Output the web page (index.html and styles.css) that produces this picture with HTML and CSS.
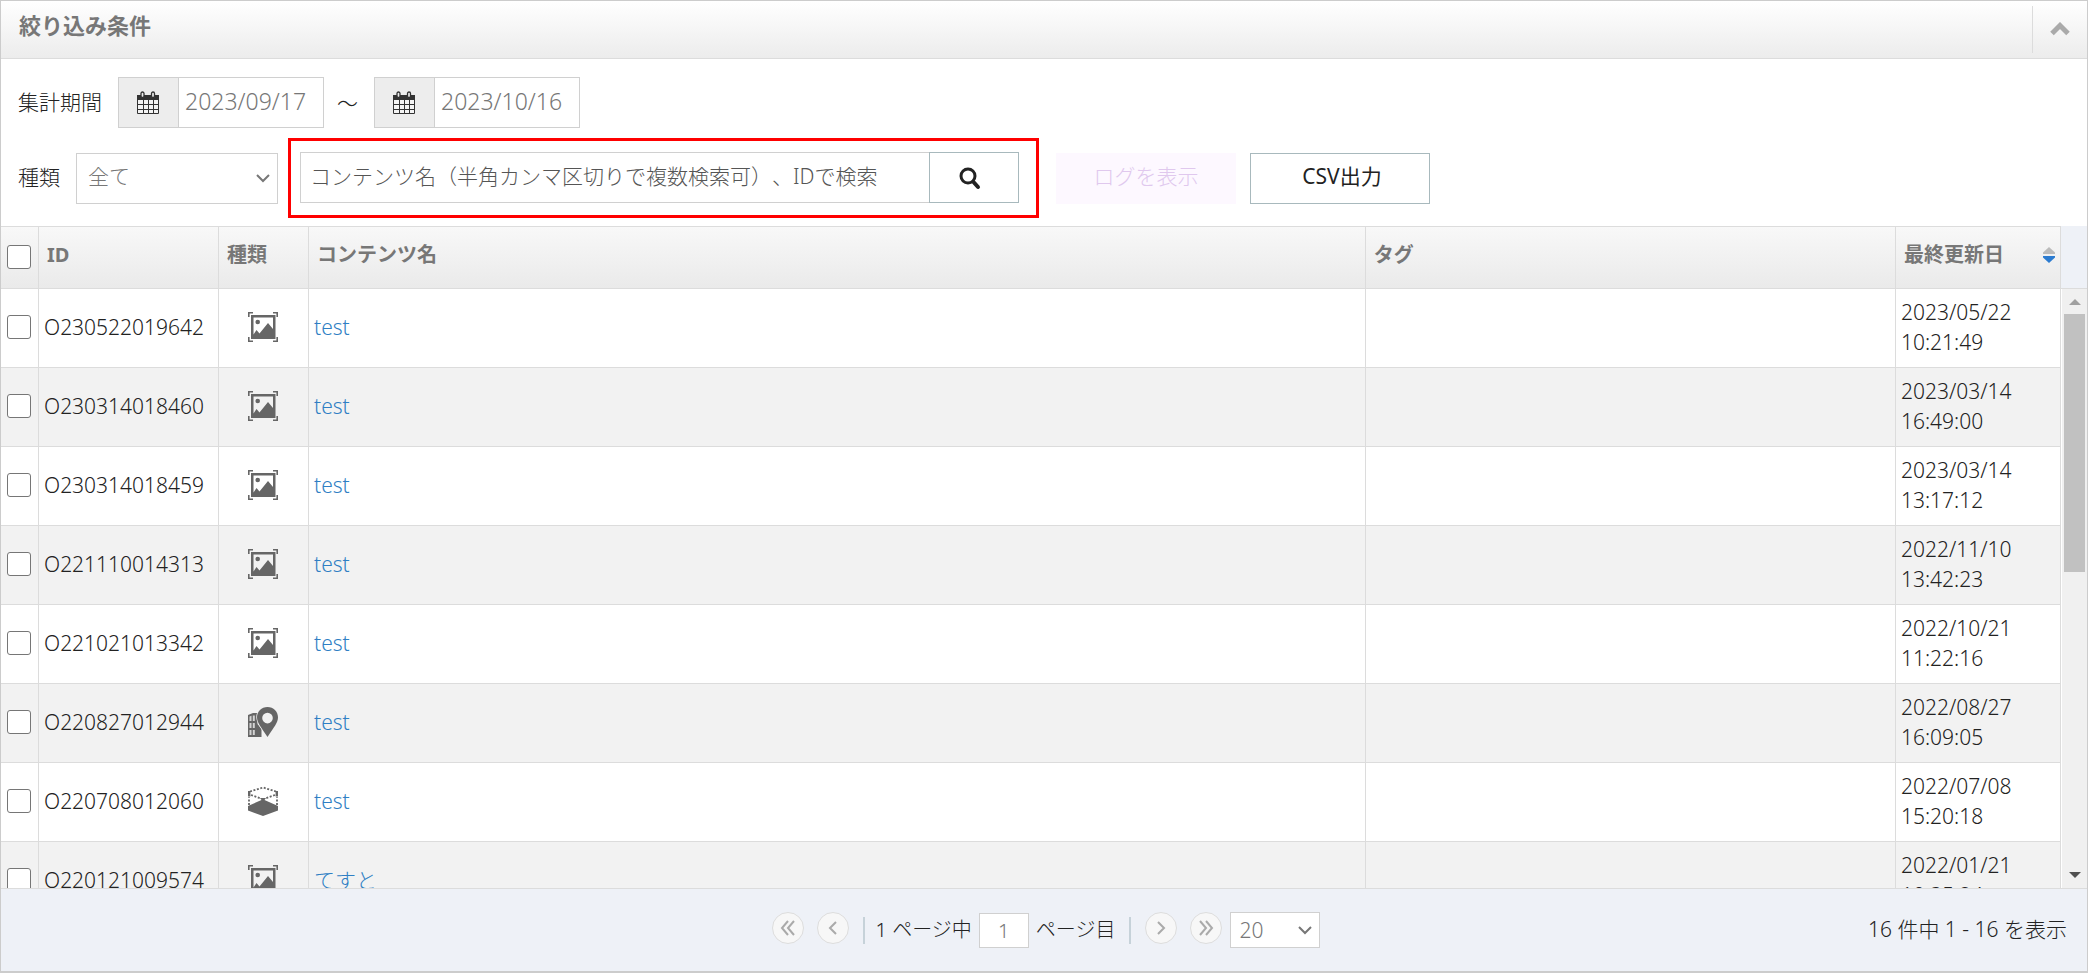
FILE: index.html
```html
<!DOCTYPE html>
<html lang="ja">
<head>
<meta charset="utf-8">
<title>絞り込み条件</title>
<link rel="stylesheet" href="styles.css">
</head>
<body>
<svg class="defs" aria-hidden="true">
  <symbol id="calendar" viewBox="0 0 22 24">
    <path fill="#333" d="M0 4h22v18q0 1-1 1H1q-1 0-1-1z"/>
    <path fill="#f4f4f4" d="M1 9h5v4H1zM7 9h4v4H7zM12 9h4v4h-4zM17 9h4v4h-4zM1 14h5v4H1zM7 14h4v4H7zM12 14h4v4h-4zM17 14h4v4h-4zM1 19h5v3H1zM7 19h4v3H7zM12 19h4v3h-4zM17 19h4v3h-4z"/>
    <rect x="4" y="1" width="3" height="5.500" rx="1.500" fill="#ededed" stroke="#333" stroke-width="1.300"/>
    <rect x="14.500" y="1" width="3" height="5.500" rx="1.500" fill="#ededed" stroke="#333" stroke-width="1.300"/>
  </symbol>
  <symbol id="image" viewBox="0 0 30 30">
    <path fill="none" stroke="#666" stroke-width="1.600" d="M.8 5V.8H5M25 .8h4.200V5M.8 25v4.200H5M25 29.200h4.200V25"/>
    <path fill="#666" fill-rule="evenodd" d="M3 3h24.500v24H3zM5.500 5.500v17L8.500 18l3 3.500L20 11l5 6V5.500z"/>
    <circle cx="9.700" cy="10" r="2.300" fill="#666"/>
  </symbol>
  <symbol id="place" viewBox="0 0 30 30">
    <path fill="#666" d="M0 8l5-2h4.500v11l4 5v8H0z"/>
    <path fill="#d4d4d4" d="M1.500 9.500l2-.8v5.300h-2zM4.800 8.500h2V14h-2zM1.500 16h2v5h-2zM4.800 16h2v5h-2zM1.500 23h2v5h-2zM4.800 23h2v5h-2z"/>
    <path fill="#666" stroke="#f2f2f2" stroke-width="1.500" paint-order="stroke" fill-rule="evenodd" d="M19.500 0C13.500 0 9 4.700 9 10.300 9 16 13 20 19.500 30 26 20 30 16 30 10.300 30 4.700 25.500 0 19.500 0zm0 5.800a5.300 5.300 0 1 1 0 10.600 5.300 5.300 0 0 1 0-10.600z"/>
  </symbol>
  <symbol id="space" viewBox="0 0 30 30">
    <path fill="#666" d="M0 20l13.500-6-1.500-2h6l-1.500 2L30 20v4.500L15 30 0 24.500z"/>
    <path fill="none" stroke="#666" stroke-width="1.800" stroke-dasharray="2 1.600" d="M2 5.500L15 1.500l13 4M1 19v-8M29 19v-8M3 9l10 3.500M27 9l-10 3.500"/>
    <path stroke="#666" stroke-width="2.400" d="M1.200 5v5.500M28.800 5v5.500"/>
  </symbol>
  <symbol id="search" viewBox="0 0 22 24">
    <circle cx="9" cy="10" r="7" fill="none" stroke="#222" stroke-width="3"/>
    <path stroke="#222" stroke-width="4" stroke-linecap="round" d="M14.500 16l4.500 5"/>
  </symbol>
  <symbol id="left" viewBox="0 0 20 20"><path class="line" d="M13 4l-6 6 6 6"/></symbol>
  <symbol id="right" viewBox="0 0 20 20"><path class="line" d="M7 4l6 6-6 6"/></symbol>
  <symbol id="first" viewBox="0 0 20 20"><path class="line" d="M10 3l-6 7 6 7M16 3l-6 7 6 7"/></symbol>
  <symbol id="last" viewBox="0 0 20 20"><path class="line" d="M4 3l6 7-6 7M10 3l6 7-6 7"/></symbol>
</svg>
<main class="panel">
  <header class="panel-head">
    <h1 class="title">絞り込み条件</h1>
    <button class="collapse" type="button" aria-label="折りたたむ"><svg class="collapse-icon" viewBox="0 0 20 14"><path d="M2 11.500l8-8 8 8" fill="none" stroke="#aaa" stroke-width="5"/></svg></button>
  </header>
  <form class="filters">
    <div class="filter-row">
      <label class="label" for="from">集計期間</label>
      <div class="date"><span class="date-icon"><svg class="icon-calendar"><use href="#calendar"/></svg></span><input class="date-input" id="from" type="text" value="2023/09/17"></div>
      <span class="tilde">～</span>
      <div class="date"><span class="date-icon"><svg class="icon-calendar"><use href="#calendar"/></svg></span><input class="date-input" type="text" aria-label="終了日" value="2023/10/16"></div>
    </div>
    <div class="filter-row">
      <label class="label" for="kind">種類</label>
      <select class="select kind" id="kind"><option>全て</option></select>
      <div class="search">
        <input class="search-input" type="text" aria-label="検索" placeholder="コンテンツ名（半角カンマ区切りで複数検索可）、IDで検索">
        <button class="search-button" type="button" aria-label="検索する"><svg class="icon-search"><use href="#search"/></svg></button>
      </div>
      <button class="button log" type="button" disabled>ログを表示</button>
      <button class="button csv" type="button">CSV出力</button>
    </div>
  </form>
  <section class="grid">
    <div class="viewport">
      <table class="table">
        <colgroup><col class="c-check"><col class="c-id"><col class="c-kind"><col class="c-name"><col class="c-tag"><col class="c-date"></colgroup>
        <thead><tr>
          <th class="check"><input type="checkbox" class="box" aria-label="すべて選択"></th><th>ID</th><th>種類</th><th>コンテンツ名</th><th>タグ</th>
          <th><div class="sortable">最終更新日<svg class="sort" viewBox="0 0 12 16"><path fill="#bbb" d="M6 0l6 5.500V7H0V5.500z"/><path fill="#2b7bd0" d="M0 9h12v1.500L6 16l-6-5.500z"/></svg></div></th>
        </tr></thead>
        <tbody>
          <tr><td class="check"><input type="checkbox" class="box" aria-label="O230522019642"></td><td>O230522019642</td><td class="kind-cell"><svg class="icon-kind"><use href="#image"/></svg></td><td><a class="link" href="#">test</a></td><td></td><td>2023/05/22<br>10:21:49</td></tr>
          <tr><td class="check"><input type="checkbox" class="box" aria-label="O230314018460"></td><td>O230314018460</td><td class="kind-cell"><svg class="icon-kind"><use href="#image"/></svg></td><td><a class="link" href="#">test</a></td><td></td><td>2023/03/14<br>16:49:00</td></tr>
          <tr><td class="check"><input type="checkbox" class="box" aria-label="O230314018459"></td><td>O230314018459</td><td class="kind-cell"><svg class="icon-kind"><use href="#image"/></svg></td><td><a class="link" href="#">test</a></td><td></td><td>2023/03/14<br>13:17:12</td></tr>
          <tr><td class="check"><input type="checkbox" class="box" aria-label="O221110014313"></td><td>O221110014313</td><td class="kind-cell"><svg class="icon-kind"><use href="#image"/></svg></td><td><a class="link" href="#">test</a></td><td></td><td>2022/11/10<br>13:42:23</td></tr>
          <tr><td class="check"><input type="checkbox" class="box" aria-label="O221021013342"></td><td>O221021013342</td><td class="kind-cell"><svg class="icon-kind"><use href="#image"/></svg></td><td><a class="link" href="#">test</a></td><td></td><td>2022/10/21<br>11:22:16</td></tr>
          <tr><td class="check"><input type="checkbox" class="box" aria-label="O220827012944"></td><td>O220827012944</td><td class="kind-cell"><svg class="icon-kind"><use href="#place"/></svg></td><td><a class="link" href="#">test</a></td><td></td><td>2022/08/27<br>16:09:05</td></tr>
          <tr><td class="check"><input type="checkbox" class="box" aria-label="O220708012060"></td><td>O220708012060</td><td class="kind-cell"><svg class="icon-kind"><use href="#space"/></svg></td><td><a class="link" href="#">test</a></td><td></td><td>2022/07/08<br>15:20:18</td></tr>
          <tr><td class="check"><input type="checkbox" class="box" aria-label="O220121009574"></td><td>O220121009574</td><td class="kind-cell"><svg class="icon-kind"><use href="#image"/></svg></td><td><a class="link" href="#">てすと</a></td><td></td><td>2022/01/21<br>10:35:24</td></tr>
        </tbody>
      </table>
    </div>
    <div class="side">
      <div class="side-head"></div>
      <div class="scrollbar">
        <svg class="arrow" viewBox="0 0 12 6"><path fill="#a0a0a0" d="M0 6l6-6 6 6z"/></svg>
        <div class="track"><div class="thumb"></div></div>
        <svg class="arrow" viewBox="0 0 12 6"><path fill="#505050" d="M0 0l6 6 6-6z"/></svg>
      </div>
    </div>
  </section>
  <footer class="footer">
    <nav class="pager">
      <div class="turns">
        <button class="turn" type="button" aria-label="最初"><svg class="icon-turn"><use href="#first"/></svg></button>
        <button class="turn" type="button" aria-label="前"><svg class="icon-turn"><use href="#left"/></svg></button>
      </div>
      <label class="page"><span>1 ページ中</span><input class="page-input" type="text" value="1"><span>ページ目</span></label>
      <div class="turns">
        <button class="turn" type="button" aria-label="次"><svg class="icon-turn"><use href="#right"/></svg></button>
        <button class="turn" type="button" aria-label="最後"><svg class="icon-turn"><use href="#last"/></svg></button>
      </div>
      <select class="select per" aria-label="表示件数"><option>20</option></select>
    </nav>
    <p class="total">16 件中 1 - 16 を表示</p>
  </footer>
</main>
</body>
</html>
```
FILE: styles.css
```css
* { box-sizing: border-box; }

body {
  margin: 0;
  color: #222;
  font: 300 21px/30px "Noto Sans", "Noto Sans CJK JP", sans-serif;
  text-spacing-trim: space-all;
}

input, select, button { font: inherit; border-radius: 0; }
svg { display: block; flex: none; }
.defs { position: absolute; width: 0; height: 0; }
.line { fill: none; stroke: #aaa; stroke-width: 2; }

.panel {
  display: flex;
  flex-direction: column;
  height: 100vh;
  border: 1px solid #ccc;
  border-bottom-width: 2px;
  background: #fff;
}

.panel-head {
  display: flex;
  justify-content: space-between;
  height: 58px;
  padding: 5px 0 5px 18px;
  border-bottom: 1px solid #dcdcdc;
  background: linear-gradient(#fff, #ececec);
}
.title { margin: 0; padding-top: 3px; color: #777; font-size: 22px; font-weight: 700; line-height: 32px; }
.collapse {
  display: grid;
  place-items: center;
  width: 55px;
  padding: 0 0 2px;
  border: 0;
  border-left: 1px solid #dcdcdc;
  background: none;
}
.collapse-icon { width: 20px; height: 14px; }

.filters { display: flex; flex-direction: column; gap: 10px; padding: 18px 18px 8px 17px; }
.filter-row { display: flex; align-items: center; height: 51px; }
.filter-row + .filter-row { height: 80px; }
.label { padding-bottom: 2px; }
.date { display: flex; width: 206px; height: 51px; margin-left: 16px; border: 1px solid #d0d0d0; }
.date-icon { display: grid; place-items: center; width: 60px; border-right: 1px solid #d0d0d0; background: #ededed; }
.icon-calendar { width: 22px; height: 24px; margin-right: 2px; }
.date-input { flex: 1; min-width: 0; padding: 0 0 4px 6px; border: 0; color: #777; font-size: 23px; }
.tilde { margin-left: 13px; }

.select {
  appearance: none;
  border: 1px solid #d0d0d0;
  color: #777;
  background: #fff url("data:image/svg+xml,%3Csvg xmlns='http://www.w3.org/2000/svg' viewBox='0 0 14 9'%3E%3Cpath d='M1 1l6 6 6-6' fill='none' stroke='%23777' stroke-width='2'/%3E%3C/svg%3E") no-repeat right 7px center / 14px 9px;
}
.kind { width: 202px; height: 51px; margin-left: 16px; padding: 0 12px 4px 11px; }
.search { display: flex; flex: none; width: 751px; height: 80px; margin-left: 10px; padding: 11px 17px 12px 9px; border: 3px solid #f00; }
.search-input { flex: 1; min-width: 0; padding: 0 9px 4px; border: 1px solid #d0d0d0; border-right: 0; }
.search-input::placeholder { color: #555; }
.search-button { display: grid; place-items: center; width: 90px; padding: 0 8px 0 0; border: 1px solid #a8b9bd; background: #fff; }
.icon-search { width: 22px; height: 24px; }
.button { width: 180px; height: 51px; padding: 0 0 4px; border: 1px solid #a8b9bd; background: #fff; color: #222; }
.log { margin-left: 17px; border-color: #fdf8ff; background: #fdf8ff; color: #e0c8ee; }
.csv { margin-left: 14px; padding-left: 4px; font-weight: 400; }

.grid { display: flex; flex: 1; min-height: 0; border-bottom: 1px solid #dcdcdc; }
.viewport { flex: 1; min-width: 0; overflow: hidden; }
.table { width: 100%; table-layout: fixed; border-collapse: separate; border-spacing: 0; }
.c-check { width: 38px; }
.c-id { width: 180px; }
.c-kind { width: 90px; }
.c-name { width: 51.3%; }
.c-date { width: 165px; }
th, td { border-right: 1px solid #dcdcdc; border-bottom: 1px solid #dcdcdc; text-align: left; }
th {
  height: 63px;
  padding: 0 8px 5px;
  border-top: 1px solid #dcdcdc;
  background: linear-gradient(#f8f8f8, #eaeaea);
  color: #777;
  font-size: 20px;
  font-weight: 700;
}
td { height: 79px; padding: 0 5px 3px; }
tbody tr:nth-child(even) { background: #f2f2f2; }
.check { padding: 0 0 2px 6px; }
.kind-cell { padding: 0 7px 2px 5px; }
.box {
  display: block;
  appearance: none;
  width: 24px;
  height: 24px;
  margin: 0;
  border: 1px solid #767676;
  border-radius: 3px;
  background: #fff;
}
.sortable { display: flex; align-items: center; justify-content: space-between; }
.sort { width: 12px; height: 16px; margin-right: -3px; }
.icon-kind { width: 30px; height: 30px; margin: 0 auto; }
.link { color: #2f7fc4; text-decoration: none; }

.side { display: flex; flex-direction: column; width: 26px; }
.side-head { height: 63px; border-bottom: 1px solid #dcdcdc; background: #eef1f7; }
.scrollbar { display: flex; flex: 1; flex-direction: column; align-items: center; gap: 9px; margin-left: 1px; padding: 10px 0; background: #f0f0f0; }
.arrow { width: 12px; height: 6px; }
.track { flex: 1; width: 21px; }
.thumb { height: 47%; background: #c1c1c1; }

.footer {
  display: grid;
  grid-template-columns: 1fr auto 1fr;
  height: 82px;
  padding: 22px 20px 0 24px;
  background: #eef1f7;
}
.pager { display: flex; grid-column: 2; height: 38px; align-items: center; }
.turns { display: flex; gap: 13px; margin-bottom: 4px; }
.turn { display: grid; place-items: center; width: 32px; height: 32px; padding: 0; border: 1px solid #ddd; border-radius: 50%; background: #f7f7f7; }
.icon-turn { width: 20px; height: 20px; }
.page { display: flex; align-items: center; gap: 7px; height: 27px; margin: 0 14px; padding: 0 14px 0 11px; border: solid #c6d2d9; border-width: 0 2px; font-size: 20px; }
.page-input { width: 50px; height: 35px; padding: 0; border: 1px solid #d0d0d0; color: #777; text-align: center; }
.per { width: 90px; height: 36px; margin-left: 8px; padding: 0 8px; }
.total { margin: 0; line-height: 36px; text-align: right; }
```
